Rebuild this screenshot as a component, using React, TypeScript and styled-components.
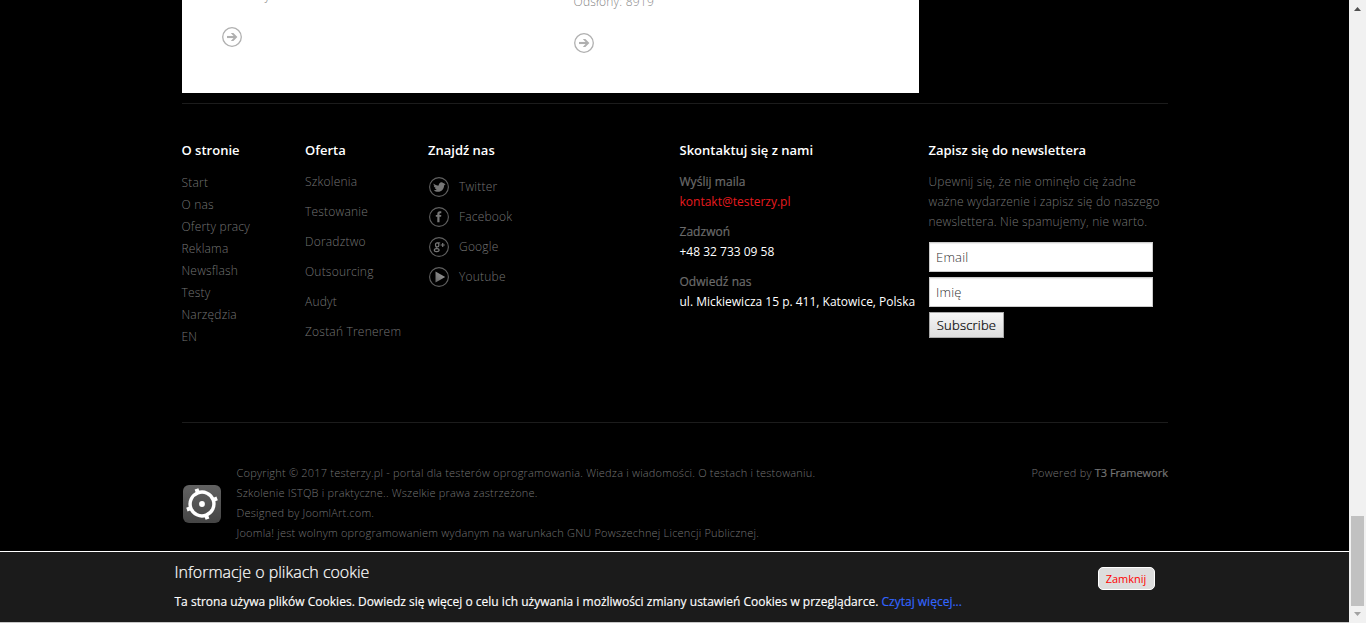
import React from "react";
import styled, { createGlobalStyle } from "styled-components";

const GlobalStyle = createGlobalStyle`
  *, *::before, *::after { box-sizing: border-box; }
  body {
    margin: 0;
    overflow: hidden;
    background: #000;
    color: #747474;
    font: 300 12px/20px "Open Sans", sans-serif;
  }
  a { color: inherit; text-decoration: none; }
  ul, p, h3, h4 { margin: 0; padding: 0; list-style: none; }
`;

const Screen = styled.div`
  display: flex;
  height: 623px;
`;

const Page = styled.div`
  display: flex;
  flex-direction: column;
  width: 1349px;
`;

const Container = styled.div`
  width: 986px;
  margin-left: 182px;
  flex: 1;
`;

const Articles = styled.div`
  display: flex;
  width: 737px;
  height: 93px;
  padding-left: 40px;
  background: #fff;
  color: #888;
  overflow: hidden;
`;

const Article = styled.div<{ $shift: number }>`
  flex: 0 0 352px;
  margin-top: ${(p) => p.$shift}px;

  p {
    height: 20px;
    margin-left: -0.5px;
    letter-spacing: 0.22px;
    white-space: nowrap;
  }
  svg { display: block; margin-top: 21px; }
`;

const FooterNav = styled.div`
  display: grid;
  grid-template-columns: 123px 123px 251.5px 249px 1fr;
  height: 320px;
  margin-top: 10px;
  padding-top: 36px;
  border-top: 1px solid #1c1c1c;
  border-bottom: 1px solid #1c1c1c;

  > :first-child { margin-left: -0.5px; }
`;

const Heading = styled.h3`
  margin-bottom: 12px;
  color: #fff;
  font-size: 13px;
  font-weight: 600;
  line-height: 20px;
  white-space: nowrap;
`;

const LinkList = styled.ul<{ $gap?: number; $line?: number }>`
  display: flex;
  flex-direction: column;
  gap: ${(p) => p.$gap ?? 0}px;
  line-height: ${(p) => p.$line ?? 20}px;
  font-size: 12px;
  letter-spacing: 0.2px;
  white-space: nowrap;
`;

const SocialLink = styled.a`
  display: flex;
  align-items: center;
  gap: 9px;
  height: 30px;

  svg { display: block; }
`;

const ContactLabel = styled.h4`
  color: #6c6c6c;
  font-size: 12px;
  font-weight: 400;
  line-height: 20px;
  letter-spacing: 0.04px;
  -webkit-text-stroke: 0.2px #6c6c6c;
`;

const ContactValue = styled.p<{ $accent?: boolean }>`
  margin-bottom: 10px;
  color: ${(p) => (p.$accent ? "#e81b1f" : "#fff")};
  font-weight: 400;
  white-space: nowrap;
`;

const NewsletterText = styled.p`
  margin-bottom: 10px;
  letter-spacing: 0.21px;
  white-space: nowrap;
`;

const Field = styled.input`
  display: block;
  width: 224px;
  height: 30px;
  margin: 0 0 5px 0.5px;
  padding: 0 6px;
  border: 1px solid #ccc;
  border-radius: 0;
  background: #fff;
  box-shadow: inset 0 1px 1px rgba(0, 0, 0, 0.075);
  font: 300 13px "Open Sans", sans-serif;
  letter-spacing: 0.2px;

  &::placeholder { color: #333; opacity: 1; }
`;

const SubscribeButton = styled.button`
  display: block;
  width: 75px;
  height: 26px;
  margin-left: 0.5px;
  padding: 0;
  border: 1px solid #a9a9a9;
  background: linear-gradient(#f6f6f6, #dddddd);
  color: #000;
  font: 300 13px "Open Sans", sans-serif;
  letter-spacing: 0.2px;
  -webkit-text-stroke: 0.2px #000;
`;

const Legal = styled.div`
  display: flex;
  padding-top: 40px;
  font-size: 11px;
  line-height: 20px;
  letter-spacing: 0.204px;
  white-space: nowrap;

  > svg { margin: 22px 15.5px 0 1px; }
`;

const Powered = styled.p`
  margin-left: auto;

  a {
    font-weight: 400;
    letter-spacing: 0;
    -webkit-text-stroke: 0.2px #747474;
  }
`;

const CookieBar = styled.div`
  display: flex;
  height: 72px;
  padding-left: 174.5px;
  border-top: 1px solid #fff;
  border-bottom: 1px solid #c8c8c8;
  background: #1b1b1b;
  color: #fff;
`;

const CookieText = styled.div`
  width: 923.5px;

  h3 {
    margin-top: 10px;
    font-size: 16px;
    font-weight: 300;
    line-height: 20px;
    -webkit-text-stroke: 0.2px #fff;
  }
  p {
    margin-top: 10px;
    font-size: 12px;
    font-weight: 400;
    letter-spacing: 0.009px;
    white-space: nowrap;
    -webkit-text-stroke: 0.15px;
  }
  a { color: #3366ff; }
`;

const CloseButton = styled.button`
  width: 57px;
  height: 23px;
  margin-top: 15px;
  padding: 0 1px 0 0;
  border: 1px solid #fff;
  border-radius: 5px;
  background: #ddd;
  color: #f00;
  font: 400 11px "Open Sans", sans-serif;
`;

const Scrollbar = styled.div`
  display: flex;
  flex-direction: column;
  align-items: center;
  width: 17px;
  background: #f1f1f1;

  svg { display: block; }
`;

const ScrollThumb = styled.div`
  width: 13px;
  height: 90px;
  margin-top: 499px;
  background: #c1c1c1;
`;

const MoreIcon = () => (
  <svg width="20" height="20" viewBox="0 0 20 20" fill="none" stroke="#b0b0b0">
    <circle cx="10" cy="10" r="9.3" strokeWidth="1.3" />
    <path d="M5 10h8.5" strokeWidth="2.1" />
    <path d="M8.8 6h2.6l4 4-4 4H8.800l3.700-4z" fill="#b0b0b0" stroke="none" />
  </svg>
);

const glyphs: Record<string, React.ReactNode> = {
  Twitter: (
    <path
      fill="#777"
      d="M4.600 6.400c1.700 1.600 3.400 2.100 5.100 2 .1-1.900 1.200-3.200 2.700-3.200.9 0 1.400.4 1.900 1l1.400-.5-.6 1.300 1.500-.1-1.500 1.500c-.1 3.700-2.600 6.300-6 6.300-1.700 0-3.200-.5-4.300-1.500 1.300.1 2.300-.2 3-.8-1-.2-1.600-.7-1.900-1.500h.9C5.600 10.400 4.900 9.700 4.800 8.700l.9.200C4.700 8.200 4.400 7.300 4.600 6.400z"
    />
  ),
  Facebook: (
    <path
      fill="#777"
      d="M8.300 15.300V9.700H6.800V7.900h1.500V7c0-1.800 1-2.700 2.600-2.700h1.400v1.900h-.9c-.7 0-.9.300-.9.900v.8h1.800l-.2 1.800h-1.600v5.600z"
    />
  ),
  Google: (
    <g fill="none" stroke="#777">
      <ellipse cx="8.200" cy="7.900" rx="1.700" ry="2" strokeWidth="1.200" />
      <path d="M8.400 5.900h2.800M7.700 9.900c-1.300.8-.2 1.300.8 1.600" strokeWidth="1" />
      <ellipse cx="7.700" cy="13.100" rx="2.400" ry="1.500" strokeWidth="1.200" transform="rotate(-6 7.700 13.100)" />
      <path d="M11.600 8h4.200M13.700 5.900v4.200" strokeWidth="1.200" />
    </g>
  ),
  Youtube: (
    <>
      <defs>
        <linearGradient id="play" x1="0" x2="1" y1="1" y2="0">
          <stop offset="0" stopColor="#666" />
          <stop offset="1" stopColor="#a0a0a0" />
        </linearGradient>
      </defs>
      <path fill="url(#play)" d="M6.500 4.600L16.200 10l-9.700 5.600z" />
    </>
  ),
};

const SocialIcon = ({ name }: { name: string }) => (
  <svg width="22" height="20" viewBox="-1 0 22 20">
    <circle cx="10" cy="10" r="9.400" fill="none" stroke="#606060" strokeWidth="1.100" />
    {glyphs[name]}
  </svg>
);

const T3Logo = () => (
  <svg width="38" height="38" viewBox="0 0 38 38">
    <defs>
      <linearGradient id="badge" x1="0" x2="0" y1="0" y2="1">
        <stop offset="0" stopColor="#626262" />
        <stop offset="1" stopColor="#454545" />
      </linearGradient>
    </defs>
    <rect width="38" height="38" rx="6" fill="url(#badge)" />
    <g transform="rotate(-20 19 19)" stroke="#fff" fill="none">
      <circle cx="19" cy="19" r="11.900" strokeWidth="3.400" />
      <path d="M19 2.900v4M19 31.100v4M2.900 19h4M31.100 19h4" strokeWidth="4" />
    </g>
    <circle cx="19" cy="19" r="2.900" fill="#fff" />
  </svg>
);

const about = ["Start", "O nas", "Oferty pracy", "Reklama", "Newsflash", "Testy", "Narzędzia", "EN"];
const offer = ["Szkolenia", "Testowanie", "Doradztwo", "Outsourcing", "Audyt", "Zostań Trenerem"];

export default function App() {
  return (
    <>
      <GlobalStyle />
      <Screen>
        <Page>
          <Container>
            <Articles>
              <Article $shift={-14}>
                <p>Trenerzy</p>
                <MoreIcon />
              </Article>
              <Article $shift={-8}>
                <p>Odsłony: 8919</p>
                <MoreIcon />
              </Article>
            </Articles>
            <FooterNav>
              <div>
                <Heading>O stronie</Heading>
                <LinkList $line={22}>
                  {about.map((t) => <li key={t}><a href="#">{t}</a></li>)}
                </LinkList>
              </div>
              <div>
                <Heading>Oferta</Heading>
                <LinkList $gap={10}>
                  {offer.map((t) => <li key={t}><a href="#">{t}</a></li>)}
                </LinkList>
              </div>
              <div>
                <Heading>Znajdź nas</Heading>
                <LinkList>
                  {Object.keys(glyphs).map((t) => (
                    <li key={t}>
                      <SocialLink href="#"><SocialIcon name={t} />{t}</SocialLink>
                    </li>
                  ))}
                </LinkList>
              </div>
              <div>
                <Heading>Skontaktuj się z nami</Heading>
                <ContactLabel>Wyślij maila</ContactLabel>
                <ContactValue $accent>kontakt@testerzy.pl</ContactValue>
                <ContactLabel>Zadzwoń</ContactLabel>
                <ContactValue>+48 32 733 09 58</ContactValue>
                <ContactLabel>Odwiedź nas</ContactLabel>
                <ContactValue>ul. Mickiewicza 15 p. 411, Katowice, Polska</ContactValue>
              </div>
              <div>
                <Heading>Zapisz się do newslettera</Heading>
                <NewsletterText>
                  Upewnij się, że nie ominęło cię żadne<br />
                  ważne wydarzenie i zapisz się do naszego<br />
                  newslettera. Nie spamujemy, nie warto.
                </NewsletterText>
                <Field placeholder="Email" />
                <Field placeholder="Imię" />
                <SubscribeButton>Subscribe</SubscribeButton>
              </div>
            </FooterNav>
            <Legal>
              <T3Logo />
              <div>
                Copyright © 2017 testerzy.pl - portal dla testerów oprogramowania. Wiedza i wiadomości. O testach i testowaniu.<br />
                Szkolenie ISTQB i praktyczne.. Wszelkie prawa zastrzeżone.<br />
                Designed by JoomlArt.com.<br />
                Joomla! jest wolnym oprogramowaniem wydanym na warunkach GNU Powszechnej Licencji Publicznej.
              </div>
              <Powered>Powered by <a href="#">T3 Framework</a></Powered>
            </Legal>
          </Container>
          <CookieBar>
            <CookieText>
              <h3>Informacje o plikach cookie</h3>
              <p>
                Ta strona używa plików Cookies. Dowiedz się więcej o celu ich używania i możliwości zmiany ustawień Cookies w przeglądarce.{" "}
                <a href="#">Czytaj więcej...</a>
              </p>
            </CookieText>
            <CloseButton>Zamknij</CloseButton>
          </CookieBar>
        </Page>
        <Scrollbar>
          <svg width="17" height="17" viewBox="0 0 17 17"><path d="M5 11l3.500-4 3.500 4z" fill="#505050" /></svg>
          <ScrollThumb />
          <svg width="17" height="17" viewBox="0 0 17 17"><path d="M5 6l3.500 4L12 6z" fill="#a3a3a3" /></svg>
        </Scrollbar>
      </Screen>
    </>
  );
}
